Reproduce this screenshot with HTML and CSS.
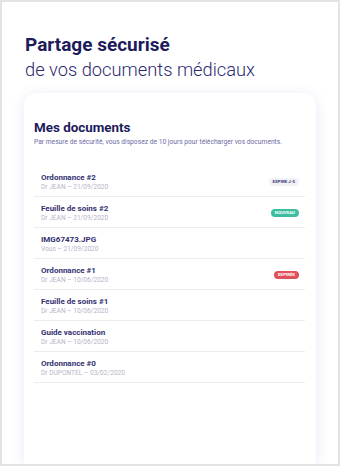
FILE: index.html
```
<!DOCTYPE html>
<html lang="fr">
<head>
	<meta charset="UTF-8">
	<title>Partage sécurisé</title>
	<link rel="stylesheet" href="styles.css">
</head>
<body>
<div class="frame">
	<header class="hero">
		<h1 class="hero-title">Partage sécurisé</h1>
		<p class="hero-sub">de vos documents médicaux</p>
	</header>

	<section class="card">
		<h2 class="card-title">Mes documents</h2>
		<p class="card-note">Par mesure de sécurité, vous disposez de 10 jours pour télécharger vos documents.</p>

		<ul class="docs">
			<li class="doc">
				<div class="doc-info">
					<div class="doc-name">Ordonnance #2</div>
					<div class="doc-meta">Dr JEAN – 21/09/2020</div>
				</div>
				<span class="badge badge-soon">Expire J-5</span>
			</li>
			<li class="doc">
				<div class="doc-info">
					<div class="doc-name">Feuille de soins #2</div>
					<div class="doc-meta">Dr JEAN – 21/09/2020</div>
				</div>
				<span class="badge badge-new">Nouveau</span>
			</li>
			<li class="doc">
				<div class="doc-info">
					<div class="doc-name">IMG67473.JPG</div>
					<div class="doc-meta">Vous – 21/09/2020</div>
				</div>
			</li>
			<li class="doc">
				<div class="doc-info">
					<div class="doc-name">Ordonnance #1</div>
					<div class="doc-meta">Dr JEAN – 10/06/2020</div>
				</div>
				<span class="badge badge-expired">Expirée</span>
			</li>
			<li class="doc">
				<div class="doc-info">
					<div class="doc-name">Feuille de soins #1</div>
					<div class="doc-meta">Dr JEAN – 10/06/2020</div>
				</div>
			</li>
			<li class="doc">
				<div class="doc-info">
					<div class="doc-name">Guide vaccination</div>
					<div class="doc-meta">Dr JEAN – 10/06/2020</div>
				</div>
			</li>
			<li class="doc">
				<div class="doc-info">
					<div class="doc-name">Ordonnance #0</div>
					<div class="doc-meta">Dr DUPONTEL – 03/02/2020</div>
				</div>
			</li>
		</ul>
	</section>
</div>
</body>
</html>
```

FILE: styles.css
```
* {
  box-sizing: border-box;
}
html,
body {
  margin: 0;
  padding: 0;
}
body {
  font-family: Roboto, "Noto Sans", sans-serif;
  background: #e3e3e6;
}
.frame {
  width: 340px;
  height: 466px;
  border: 2px solid #e3e3e6;
  background: #fff;
  overflow: hidden;
  display: flex;
  flex-direction: column;
}

/* heading */
.hero {
  padding: 30px 0 0 23px;
}
.hero-title {
  margin: 0;
  font-size: 19px;
  line-height: 25px;
  font-weight: 700;
  color: #1d1b5c;
}
.hero-sub {
  margin: 0;
  font-size: 18.3px;
  line-height: 25px;
  font-weight: 300;
  color: #2b2970;
}

/* card */
.card {
  flex: 1;
  margin: 11px 22px 0 22px;
  padding: 27px 11px 0 10px;
  background: #fff;
  border-radius: 13px 13px 0 0;
  box-shadow: 0 2px 14px rgba(80, 70, 190, 0.13);
}
.card-title {
  margin: 0;
  font-size: 13.4px;
  line-height: 16px;
  font-weight: 700;
  color: #1d1b5c;
}
.card-note {
  margin: 2px 0 0;
  font-size: 6.7px;
  line-height: 9px;
  color: #6d6ba6;
}
.docs {
  list-style: none;
  margin: 19px 0 0;
  padding: 0;
}
.doc {
  display: flex;
  align-items: center;
  justify-content: space-between;
  padding: 7px 6px 5px 7px;
  border-bottom: 1px solid #ececf1;
}
.doc-name {
  font-size: 8px;
  line-height: 10px;
  font-weight: 700;
  color: #34316f;
}
.doc-meta {
  font-size: 6.6px;
  line-height: 8px;
  color: #b6b5c8;
}
.badge {
  display: inline-block;
  padding: 0 4px;
  height: 8px;
  line-height: 8px;
  border-radius: 4px;
  font-size: 4.4px;
  font-weight: 700;
  text-transform: uppercase;
}
.badge-soon {
  background: #f1f1f6;
  color: #3a3876;
}
.badge-new {
  background: #3dbea2;
  color: #fff;
}
.badge-expired {
  background: #e0505a;
  color: #fff;
}
```
